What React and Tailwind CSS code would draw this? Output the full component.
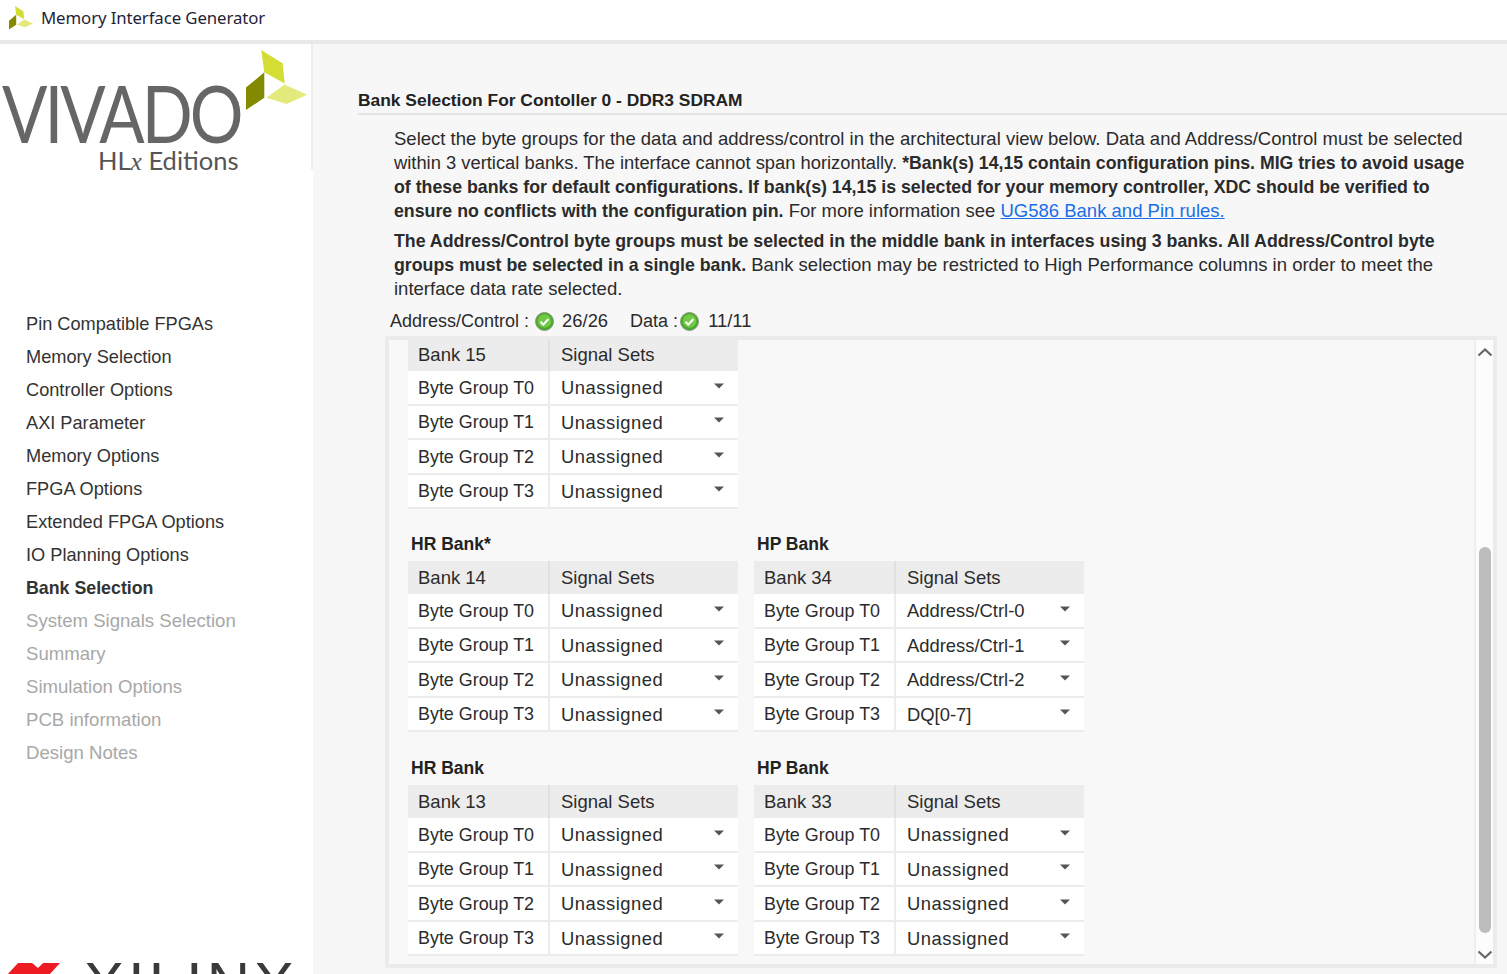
const nav = [
  ["Pin Compatible FPGAs", "on"],
  ["Memory Selection", "on"],
  ["Controller Options", "on"],
  ["AXI Parameter", "on"],
  ["Memory Options", "on"],
  ["FPGA Options", "on"],
  ["Extended FPGA Options", "on"],
  ["IO Planning Options", "on"],
  ["Bank Selection", "active"],
  ["System Signals Selection", "off"],
  ["Summary", "off"],
  ["Simulation Options", "off"],
  ["PCB information", "off"],
  ["Design Notes", "off"],
];

const Caret = () => (
  <svg width="10" height="6" viewBox="0 0 10 6" className="mr-[14px] mb-[3px]">
    <path d="M0 0.5h10L5 5.5z" fill="#555" />
  </svg>
);

const Check = () => (
  <svg width="19" height="19" viewBox="0 0 19 19">
    <circle cx="9.5" cy="9.5" r="9" fill="#4aa82c" stroke="#8a9a80" strokeWidth="1" />
    <circle cx="9.5" cy="9" r="6.8" fill="#72c948" />
    <path d="M5.5 9.8l2.8 2.8 5.2-5.6" fill="none" stroke="#fff" strokeWidth="2" />
  </svg>
);

const LeafMark = ({ className }) => (
  <svg viewBox="0 0 60 60" className={className}>
    <polygon points="15,0 36,13 38,33 18,22" fill="#d4dd34" />
    <polygon points="18,22 0,37 0,59 18,47" fill="#838a00" />
    <polygon points="38,34 60,44 40,53 20,47" fill="#e3e97a" />
  </svg>
);

const BankTable = ({ bank, rows }) => (
  <div className="w-[330px] text-[17.9px] leading-none text-[#2b2b2b]">
    <div className="flex h-[33px] bg-[#ececec] items-center text-[18.5px]">
      <div className="w-[142px] h-full pl-[10px] pt-[2px] flex items-center border-r-2 border-[#e0e0e0]">Bank {bank}</div>
      <div className="pl-[11px] pt-[2px]">Signal Sets</div>
    </div>
    {rows.map((r, i) => (
      <div key={i} className="flex h-[34.5px] items-center border-b-2 border-[#ececec] bg-white">
        <div className="w-[142px] h-full pl-[10px] pt-[3px] flex items-center border-r-2 border-[#ececec]">Byte Group T{i}</div>
        <div className="flex-1 pl-[11px] flex items-center justify-between text-[18.4px]">
          <span className={r === "Unassigned" ? "pt-[2px] tracking-[0.5px]" : "pt-[2px]"}>{r}</span>
          <Caret />
        </div>
      </div>
    ))}
  </div>
);

const un = ["Unassigned", "Unassigned", "Unassigned", "Unassigned"];

const BankBlock = ({ label, bank, rows }) => (
  <div className="w-[330px]">
    <div className="h-[26px] pl-[3px] font-bold text-[17.5px] leading-[18px] text-[#222]">{label}</div>
    <BankTable bank={bank} rows={rows} />
  </div>
);

export default function App() {
  return (
    <div className="h-[974px] w-[1507px] overflow-hidden bg-[#f7f7f7] flex flex-col font-['Liberation_Sans',Arial,sans-serif]">
      <header className="h-[44px] shrink-0 bg-white border-b-4 border-[#e9e9e9] flex items-center pl-[9px] pb-[5px]">
        <LeafMark className="w-[24px] h-[24px]" />
        <span className="ml-[8px] text-[16.8px] text-[#1f1f3a] font-['Noto_Sans',sans-serif] tracking-[-0.1px]">Memory Interface Generator</span>
      </header>

      <div className="flex flex-1 min-h-0">
        <aside className="w-[313px] shrink-0 bg-white overflow-hidden flex flex-col">
          <div className="h-[126px] shrink-0 border-r-2 border-[#eeeeee] relative">
            <div className="absolute left-[246px] top-[6px]">
              <LeafMark className="w-[61px] h-[61px]" />
            </div>
            <div className="absolute left-[2px] top-[39px] text-[79px] leading-[60px] font-['Lato',sans-serif] font-normal text-[#666] tracking-[-3.5px] origin-left scale-x-[0.85]">VIVADO</div>
            <div className="absolute left-[98px] top-[101px] text-[25.5px] leading-[30px] font-['Lato',sans-serif] font-normal text-[#555]">
              HL<span className="font-['Liberation_Serif',serif] italic">x</span> Editions
            </div>
          </div>
          <nav className="mt-[138px] pl-[26px] flex flex-col text-[18.2px] leading-[33px]">
            {nav.map(([t, s]) => (
              <div
                key={t}
                className={s === "active" ? "font-bold text-[17.8px] text-[#333] h-[33px]" : s === "off" ? "text-[18.6px] leading-[31px] text-[#a8a8a8] h-[33px]" : "text-[#333] h-[33px]"}
              >
                {t}
              </div>
            ))}
          </nav>
          <div className="mt-[193px] flex items-start pl-[7px] h-[60px] shrink-0">
            <svg width="54" height="12" viewBox="0 0 54 12">
              <polygon points="11,0 25,0 31,5 36,0 53,0 42,12 0,12" fill="#ed1c24" />
            </svg>
            <span className="ml-[23px] -mt-[9px] text-[60px] leading-[60px] text-[#3a3a3a] tracking-[4px]">XILINX</span>
          </div>
        </aside>

        <main className="flex-1 min-w-0 pl-[45px] pr-[10px] flex flex-col">
          <h1 className="mt-[45px] h-[26px] border-b-2 border-[#e4e4e4] font-bold text-[17.4px] leading-[22px] text-[#222] -mr-[10px]">
            Bank Selection For Contoller 0 - DDR3 SDRAM
          </h1>
          <div className="pl-[36px] mt-[12px] text-[18.5px] leading-[24px] text-[#2b2b2b] whitespace-nowrap">
            <p>
              Select the byte groups for the data and address/control in the architectural view below. Data and Address/Control must be selected
              <br />
              <span className="text-[18.35px]">within 3 vertical banks. The interface cannot span horizontally.</span> <b className="text-[17.7px]">*Bank(s) 14,15 contain configuration pins. MIG tries to avoid usage</b>
              <br />
              <b className="text-[17.75px]">of these banks for default configurations. If bank(s) 14,15 is selected for your memory controller, XDC should be verified to</b>
              <br />
              <b className="text-[17.75px]">ensure no conflicts with the configuration pin.</b> For more information see <a className="text-[#1a6ee8] underline">UG586 Bank and Pin rules.</a>
            </p>
            <p className="mt-[6px]">
              <b className="text-[17.75px]">The Address/Control byte groups must be selected in the middle bank in interfaces using 3 banks. All Address/Control byte</b>
              <br />
              <b className="text-[17.75px]">groups must be selected in a single bank.</b> Bank selection may be restricted to High Performance columns in order to meet the
              <br />
              interface data rate selected.
            </p>
          </div>
          <div className="pl-[32px] mt-[8px] h-[24px] flex items-center text-[18px] text-[#2b2b2b]">
            <span>Address/Control :</span>
            <span className="ml-[6px]"><Check /></span>
            <span className="ml-[8px] text-[18.4px]">26/26</span>
            <span className="ml-[22px]">Data :</span>
            <span className="ml-[2px]"><Check /></span>
            <span className="ml-[9px] text-[18.4px]">11/11</span>
          </div>
          <div className="ml-[27px] mt-[3px] h-[632px] border-4 border-[#ebebeb] flex shrink-0">
            <div className="flex-1 pl-[19px] overflow-hidden bg-[#f8f8f8]">
              <div className="-mt-[2px]">
                <BankTable bank={15} rows={un} />
              </div>
              <div className="mt-[26px] flex gap-[16px]">
                <BankBlock label="HR Bank*" bank={14} rows={un} />
                <BankBlock label="HP Bank" bank={34} rows={["Address/Ctrl-0", "Address/Ctrl-1", "Address/Ctrl-2", "DQ[0-7]"]} />
              </div>
              <div className="mt-[27px] flex gap-[16px]">
                <BankBlock label="HR Bank" bank={13} rows={un} />
                <BankBlock label="HP Bank" bank={33} rows={un} />
              </div>
            </div>
            <div className="w-[19px] shrink-0 border-l-2 border-[#eeeeee] bg-[#fcfcfc] flex flex-col items-center">
              <svg width="16" height="10" viewBox="0 0 16 10" className="mt-[7px] shrink-0">
                <path d="M1.5 8.5L8 2.5l6.5 6" fill="none" stroke="#666" strokeWidth="2.2" />
              </svg>
              <div className="mt-[190px] w-[12px] h-[386px] shrink-0 rounded-full bg-[#bdbdbd]" />
              <svg width="16" height="10" viewBox="0 0 16 10" className="mt-[17px] shrink-0">
                <path d="M1.5 1.5L8 7.5l6.5-6" fill="none" stroke="#666" strokeWidth="2.2" />
              </svg>
            </div>
          </div>
        </main>
      </div>
    </div>
  );
}
